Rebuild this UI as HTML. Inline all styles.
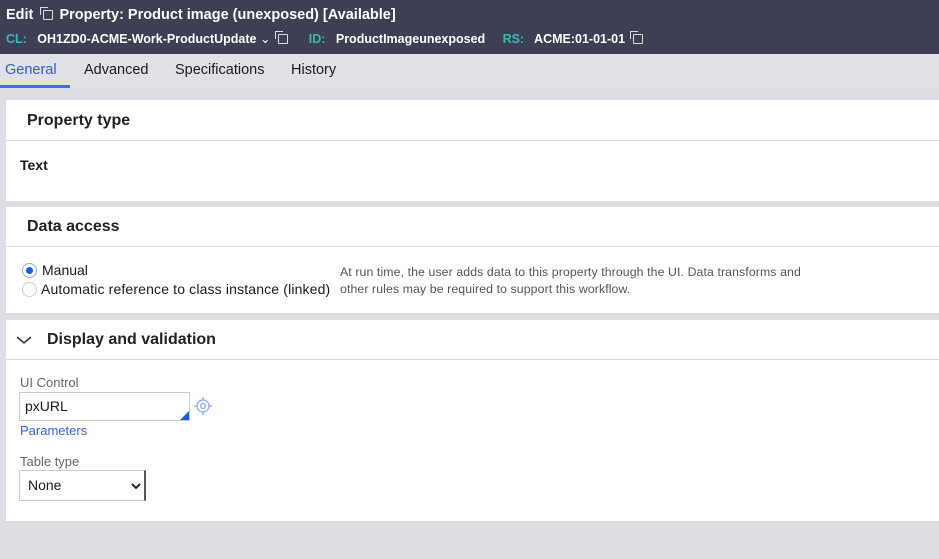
<!DOCTYPE html>
<html><head><style>
*{margin:0;padding:0;box-sizing:border-box}
body{width:939px;height:559px;background:#dddee3;font-family:"Liberation Sans",sans-serif;color:#1a1a1a;position:relative;overflow:hidden}
.hd{position:absolute;left:0;top:0;width:939px;height:54px;background:#3d3f55;color:#fff}
.abs{position:absolute;white-space:nowrap}
.tabs{position:absolute;top:54px;left:0;width:939px;height:34px;background:#e0e1e6}
.panel{position:absolute;left:6px;width:933px;background:#fff}
.ph{position:absolute;left:0;width:933px;border-bottom:1px solid #dcdde2}
.copy{display:inline-block;width:10px;height:10px;border:1.3px solid #ddd;border-radius:1px;position:relative;vertical-align:-1px}
.copy:before{content:"";position:absolute;left:-4px;top:-4px;width:7px;height:7px;border-left:1.3px solid #ddd;border-top:1.3px solid #ddd}
</style></head><body>
<div class="hd">
<div class="abs" style="left:6px;top:7px;font-size:14.5px;font-weight:bold">Edit <span class="copy" style="margin:0 2px 0 6px"></span> Property: Product image (unexposed) [Available]</div>
<div class="abs" style="left:6px;top:31px;font-size:12.5px;font-weight:bold"><span style="color:#3fb6b0">CL:</span>&nbsp;&nbsp; OH1ZD0-ACME-Work-ProductUpdate <span style="font-weight:normal">&#8964;</span> <span class="copy" style="margin-left:4px"></span>&nbsp;&nbsp;&nbsp;&nbsp;&nbsp; <span style="color:#3fb6b0">ID:</span>&nbsp;&nbsp; ProductImageunexposed&nbsp;&nbsp;&nbsp;&nbsp; <span style="color:#3fb6b0">RS:</span>&nbsp;&nbsp; ACME:01-01-01 <span class="copy" style="margin-left:4px"></span></div>
</div>
<div class="tabs">
<div class="abs" style="left:5px;top:8px;font-size:14.5px;color:#2e5bd6">General</div>
<div class="abs" style="left:0;top:31px;width:70px;height:3px;background:#3b6ef0"></div>
<div class="abs" style="left:84px;top:8px;font-size:14.5px">Advanced</div>
<div class="abs" style="left:175px;top:8px;font-size:14.5px">Specifications</div>
<div class="abs" style="left:291px;top:8px;font-size:14.5px">History</div>
</div>
<div class="panel" style="top:100px;height:101px">
<div class="ph" style="top:0;height:41px"></div>
<div class="abs" style="left:21px;top:12px;font-size:16px;font-weight:bold;color:#222">Property type</div>
<div class="abs" style="left:14px;top:57px;font-size:14px;font-weight:bold">Text</div>
</div>
<div class="panel" style="top:207px;height:106px">
<div class="ph" style="top:0;height:40px"></div>
<div class="abs" style="left:21px;top:11px;font-size:16px;font-weight:bold;color:#222">Data access</div>
<div class="abs" style="left:16px;top:56px;width:15px;height:15px;border:1px solid #aab;border-radius:50%"><div style="margin:3px;width:7px;height:7px;border-radius:50%;background:#1a5fe0"></div></div>
<div class="abs" style="left:36px;top:55px;font-size:14px">Manual</div>
<div class="abs" style="left:16px;top:75px;width:15px;height:15px;border:1px solid #ccd;border-radius:50%"></div>
<div class="abs" style="left:35px;top:74px;font-size:14px;letter-spacing:0.15px">Automatic reference to class instance (linked)</div>
<div class="abs" style="left:334px;top:57px;font-size:12.3px;color:#555;line-height:17px;letter-spacing:0.1px">At run time, the user adds data to this property through the UI. Data transforms and<br>other rules may be required to support this workflow.</div>
</div>
<div class="panel" style="top:320px;height:201px">
<div class="ph" style="top:0;height:40px"></div>
<svg class="abs" style="left:10px;top:16px" width="16" height="9"><path d="M1 1L8 7L15 1" fill="none" stroke="#333" stroke-width="1.5"/></svg>
<div class="abs" style="left:41px;top:11px;font-size:16px;font-weight:bold;color:#222">Display and validation</div>
<div class="abs" style="left:14px;top:55px;font-size:13px;color:#666">UI Control</div>
<div class="abs" style="left:13px;top:72px;width:171px;height:29px;border:1px solid #ccc"><div style="position:absolute;right:0;bottom:0;width:0;height:0;border-left:9px solid transparent;border-bottom:9px solid #1a5fe0"></div></div>
<div class="abs" style="left:19px;top:78px;font-size:14px">pxURL</div>
<svg class="abs" style="left:188px;top:77px" width="18" height="18"><circle cx="9" cy="9" r="6" fill="none" stroke="#9bb3ee" stroke-width="1.5"/><circle cx="9" cy="9" r="2.5" fill="none" stroke="#9bb3ee" stroke-width="1.5"/><path d="M9 0V3M9 15V18M0 9H3M15 9H18" stroke="#9bb3ee" stroke-width="1.5"/></svg>
<div class="abs" style="left:14px;top:103px;font-size:13px;color:#3a63d8">Parameters</div>
<div class="abs" style="left:14px;top:134px;font-size:13px;color:#666">Table type</div>
<div class="abs" style="left:13px;top:150px;width:127px;height:31px;border:1px solid #ccc;border-right:2px solid #555"></div>
<div class="abs" style="left:22px;top:157px;font-size:14px">None</div>
<svg class="abs" style="left:125px;top:163px" width="10" height="7"><path d="M1 1L5 5L9 1" fill="none" stroke="#222" stroke-width="2"/></svg>
</div>
</body></html>
